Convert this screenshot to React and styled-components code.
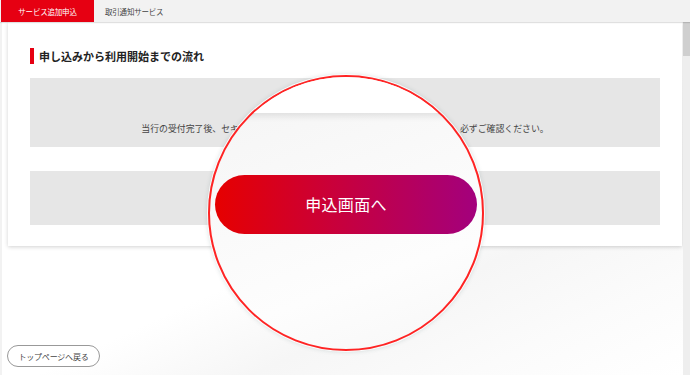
import React from "react";
import styled, { createGlobalStyle } from "styled-components";

const Global = createGlobalStyle`
  html, body { margin: 0; padding: 0; }
  body {
    width: 690px;
    height: 375px;
    overflow: hidden;
    background: #fff;
    font-family: "Noto Sans CJK JP", "Noto Sans", sans-serif;
  }
  * { box-sizing: border-box; }
`;

const Page = styled.div`
  position: relative;
  width: 690px;
  height: 375px;
  display: flex;
  flex-direction: column;
  overflow: hidden;
`;

const TabBar = styled.div`
  height: 22px;
  display: flex;
  align-items: stretch;
  background: #f2f2f2;
  position: relative;
  z-index: 2;
  box-shadow: 0 1px 1px rgba(0, 0, 0, 0.12);
`;

const Tab = styled.div`
  width: ${(p) => (p.$active ? "93px" : "auto")};
  margin-left: ${(p) => (p.$active ? "1px" : "7px")};
  padding: 0 ${(p) => (p.$active ? "0" : "4px")};
  display: flex;
  align-items: center;
  justify-content: center;
  font-size: 7.5px;
  letter-spacing: -0.2px;
  color: ${(p) => (p.$active ? "#fff" : "#444")};
  background: ${(p) => (p.$active ? "#e60012" : "transparent")};
`;

const Main = styled.div`
  flex: 1;
  display: flex;
  min-height: 0;
`;

const Content = styled.div`
  flex: 1;
  display: flex;
  flex-direction: column;
  padding: 0 1px 8px 8px;
  background: linear-gradient(155deg, #ffffff 55%, #f6f6f6 70%, #fbfbfb 85%, #ffffff 100%);
  border-left: 2px solid #f2f2f2;
`;

const Card = styled.section`
  height: 224px;
  margin-left: -2px;
  background: #fff;
  box-shadow: 0 1px 4px rgba(0, 0, 0, 0.18);
  padding: 26px 22px 0 22px;
  display: flex;
  flex-direction: column;
`;

const Heading = styled.h2`
  margin: 0 0 14px 0;
  height: 16px;
  display: flex;
  align-items: center;
  gap: 5px;
  font-size: 11px;
  font-weight: 700;
  color: #222;
  &::before {
    content: "";
    width: 4px;
    height: 16px;
    background: #e60012;
  }
`;

const GrayBox = styled.div`
  height: ${(p) => p.$h}px;
  margin-bottom: ${(p) => p.$mb || 0}px;
  background: #e6e6e6;
  display: flex;
  align-items: flex-end;
  justify-content: center;
  padding-bottom: ${(p) => p.$pb || 0}px;
`;

const BoxText = styled.p`
  margin: 0;
  font-size: 8.9px;
  line-height: 12px;
  color: #444;
  white-space: nowrap;
`;

const Spacer = styled.div`
  flex: 1;
`;

const BackButton = styled.button`
  align-self: flex-start;
  margin-left: -3px;
  height: 22px;
  width: 93px;
  border: 1px solid #999;
  border-radius: 11px;
  background: #fff;
  font-family: inherit;
  font-size: 8px;
  color: #444;
  padding: 0;
  letter-spacing: -0.2px;
`;

const ScrollTrack = styled.div`
  width: 7px;
  background: #eeeeee;
  display: flex;
  flex-direction: column;
`;

const ScrollThumb = styled.div`
  height: 34px;
  background: #cfcfcf;
`;

const Lens = styled.div`
  position: absolute;
  left: 208px;
  top: 75px;
  width: 276px;
  height: 276px;
  border-radius: 50%;
  border: 2px solid #ff2424;
  overflow: hidden;
  display: flex;
  flex-direction: column;
  background: linear-gradient(160deg, #f4f4f4 0%, #fafafa 45%, #fdfdfd 70%, #f7f7f7 100%);
  box-shadow: 0 0 0 1px rgba(255, 255, 255, 0.9), 0 0 4px 1px rgba(60, 100, 100, 0.18);
  z-index: 5;
`;

const LensBand = styled.div`
  height: 36px;
  flex-shrink: 0;
  background: #fff;
  box-shadow: 0 3px 7px rgba(0, 0, 0, 0.1);
  position: relative;
  z-index: 1;
`;

const LensBody = styled.div`
  flex: 1;
  display: flex;
  justify-content: center;
  padding-top: 62px;
`;

const ApplyButton = styled.button`
  width: 262px;
  height: 59px;
  border: none;
  border-radius: 30px;
  background: linear-gradient(90deg, #e60000 0%, #c9003a 45%, #a3007d 100%);
  color: #fff;
  font-family: inherit;
  font-size: 16px;
  letter-spacing: 0.3px;
  padding: 0 0 2px 0;
`;

export default function App() {
  return (
    <>
      <Global />
      <Page>
        <TabBar>
          <Tab $active>サービス追加申込</Tab>
          <Tab>取引通知サービス</Tab>
        </TabBar>
        <Main>
          <Content>
            <Card>
              <Heading>申し込みから利用開始までの流れ</Heading>
              <GrayBox $h={69} $mb={24} $pb={12}>
                <BoxText>
                  当行の受付完了後、セキュリティカードを郵送いたしますので、到着の際には　必ずご確認ください。
                </BoxText>
              </GrayBox>
              <GrayBox $h={54} />
            </Card>
            <Spacer />
            <BackButton>トップページへ戻る</BackButton>
          </Content>
          <ScrollTrack>
            <ScrollThumb />
          </ScrollTrack>
        </Main>
        <Lens>
          <LensBand />
          <LensBody>
            <ApplyButton>申込画面へ</ApplyButton>
          </LensBody>
        </Lens>
      </Page>
    </>
  );
}
